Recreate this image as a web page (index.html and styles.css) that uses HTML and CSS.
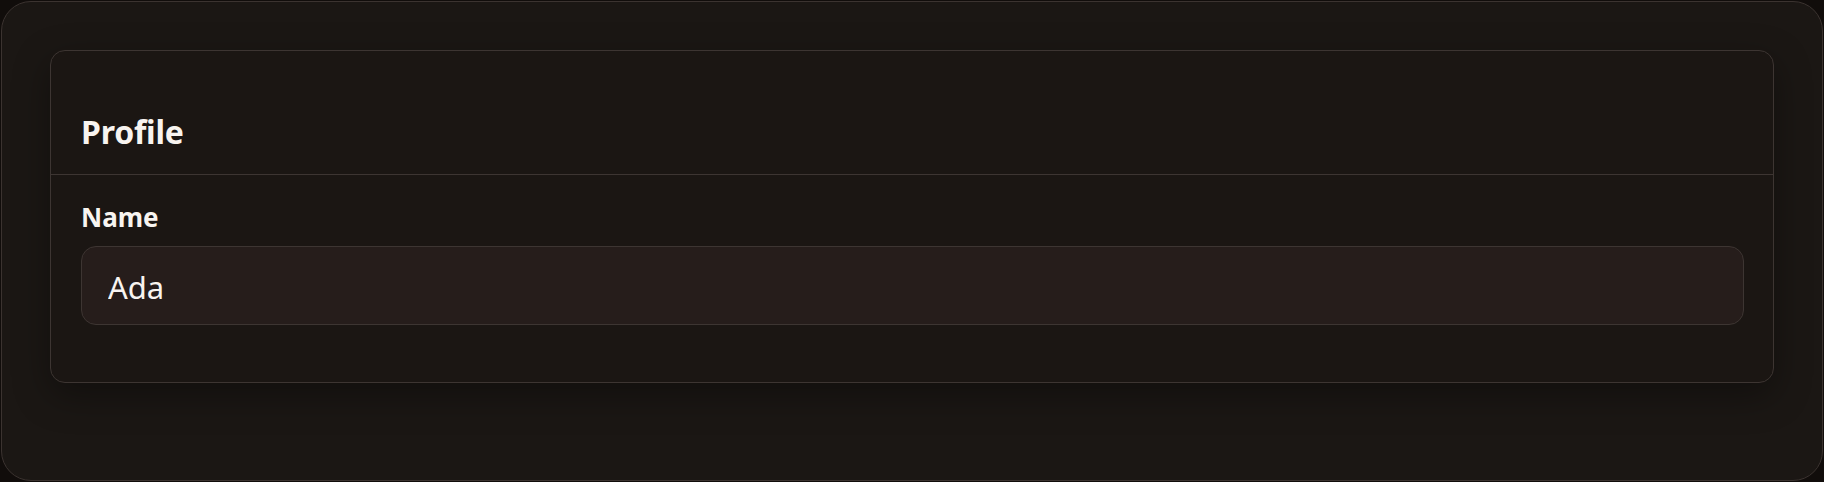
FILE: index.html
```html
<!DOCTYPE html>
<html lang="en">
<head>
<meta charset="utf-8">
<title>Profile</title>
<link rel="stylesheet" href="styles.css">
</head>
<body>
<div class="frame">
  <section class="card">
    <header class="card-header">
      <h2 class="card-title">Profile</h2>
    </header>
    <div class="card-body">
      <label class="field-label" for="name">Name</label>
      <input class="field-input" id="name" type="text" value="Ada">
    </div>
  </section>
</div>
</body>
</html>
```

FILE: styles.css
```css
* { box-sizing: border-box; }

html, body {
  margin: 0;
  background: #110d0b;
}

body {
  padding: 1px;
  font-family: "Noto Sans", "Lato", sans-serif;
  color: #f8f4f0;
}

.frame {
  height: 480px;
  border: 1px solid #3b3330;
  border-radius: 30px;
  background: #1b1714;
  padding: 48px;
}

.card {
  border: 1px solid #3d3532;
  border-radius: 15px;
  background: #1b1613;
  box-shadow: 0 12px 36px rgba(0, 0, 0, 0.35);
}

.card-header {
  padding: 62px 25px 23px 30px;
  border-bottom: 1px solid #3d3532;
}

.card-title {
  margin: 0;
  font-size: 32px;
  line-height: 38px;
  font-weight: 700;
  letter-spacing: -0.2px;
}

.card-body {
  display: flex;
  flex-direction: column;
  gap: 13px;
  padding: 27px 29px 57px 30px;
}

.field-label {
  font-size: 26px;
  line-height: 31px;
  font-weight: 700;
}

.field-input {
  height: 79px;
  border: 1px solid #3d3532;
  border-radius: 15px;
  background: #261d1b;
  color: #f8f4f0;
  font-family: inherit;
  font-size: 31px;
  padding: 2px 26px 0;
  outline: none;
}
```
